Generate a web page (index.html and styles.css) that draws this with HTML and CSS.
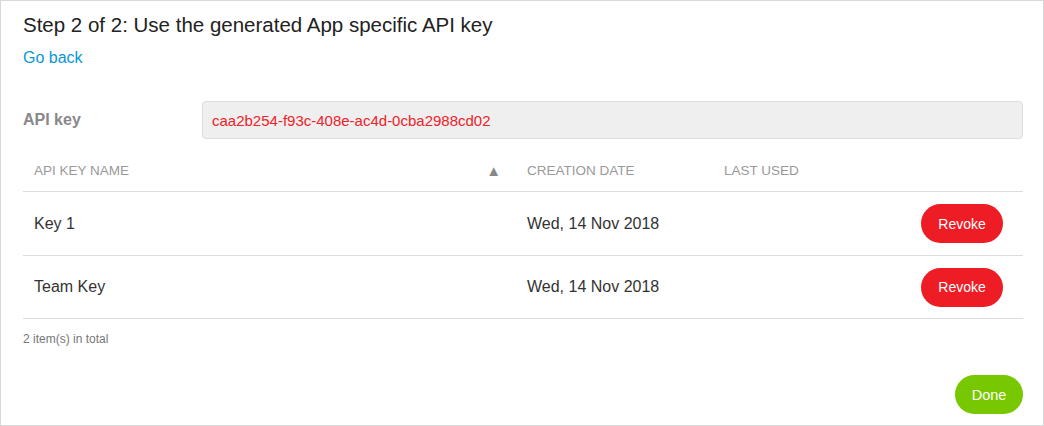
FILE: index.html
```html
<!DOCTYPE html>
<html lang="en">
<head>
<meta charset="utf-8">
<title>API key</title>
<link rel="stylesheet" href="styles.css">
</head>
<body>
<div class="panel">
  <h1 class="title">Step 2 of 2: Use the generated App specific API key</h1>
  <a class="back" href="#">Go back</a>
  <div class="key-row">
    <div class="key-label">API key</div>
    <div class="key-box">caa2b254-f93c-408e-ac4d-0cba2988cd02</div>
  </div>
  <div class="table">
    <div class="row head">
      <div class="cell name">API KEY NAME <span class="sort">&#9650;</span></div>
      <div class="cell date">CREATION DATE</div>
      <div class="cell used">LAST USED</div>
      <div class="cell act"></div>
    </div>
    <div class="row">
      <div class="cell name">Key 1</div>
      <div class="cell date">Wed, 14 Nov 2018</div>
      <div class="cell used"></div>
      <div class="cell act"><button class="btn revoke">Revoke</button></div>
    </div>
    <div class="row">
      <div class="cell name">Team Key</div>
      <div class="cell date">Wed, 14 Nov 2018</div>
      <div class="cell used"></div>
      <div class="cell act"><button class="btn revoke">Revoke</button></div>
    </div>
  </div>
  <div class="total">2 item(s) in total</div>
  <div class="footer"><button class="btn done">Done</button></div>
</div>
</body>
</html>
```
FILE: styles.css
```css
* { box-sizing: border-box; }
html, body { margin: 0; padding: 0; }
body {
  font-family: Arial, "Liberation Sans", Helvetica, sans-serif;
  background: #fff;
  color: #333;
}
.panel {
  width: 1044px;
  height: 426px;
  border: 1px solid #d9d9d9;
  padding: 0 20px 11px 22px;
  display: flex;
  flex-direction: column;
}
.title {
  margin: 12px 0 0;
  font-size: 20.5px;
  line-height: 24px;
  font-weight: normal;
  color: #222;
}
.back {
  margin-top: 11px;
  font-size: 16px;
  line-height: 20px;
  color: #0a96d8;
  text-decoration: none;
  align-self: flex-start;
}
.key-row {
  margin-top: 33px;
  display: flex;
  align-items: center;
}
.key-label {
  width: 179px;
  font-size: 16px;
  font-weight: bold;
  color: #888;
}
.key-box {
  flex: 1;
  height: 38px;
  background: #efefef;
  border: 1px solid #dcdcdc;
  border-radius: 4px;
  padding: 0 9px;
  display: flex;
  align-items: center;
  font-size: 15px;
  color: #ee2229;
}
.table { margin-top: 12px; }
.row {
  display: grid;
  grid-template-columns: 494px 197px 1fr 120px;
  height: 64px;
  border-bottom: 1px solid #dcdcdc;
  align-items: center;
  font-size: 16px;
  color: #333;
}
.row:last-child { height: 63px; }
.row.head {
  height: 41px;
  padding-bottom: 2px;
  font-size: 13.5px;
  color: #999;
}
.cell { padding-left: 10px; }
.cell.name {
  padding-left: 11px;
  padding-right: 16px;
  display: flex;
  justify-content: space-between;
  align-items: center;
}
.sort { color: #888; font-size: 15px; }
.cell.act {
  padding: 0 20px 0 0;
  display: flex;
  justify-content: flex-end;
}
.btn {
  border: none;
  height: 39px;
  border-radius: 20px;
  color: #fff;
  font-family: Arial, "Liberation Sans", sans-serif;
  font-size: 14px;
  padding: 0;
  cursor: pointer;
}
.revoke { width: 82px; background: #ee1c25; }
.done { width: 68px; background: #77c800; font-size: 14.5px; }
.total {
  margin-top: 13px;
  font-size: 12px;
  color: #777;
}
.footer {
  margin-top: auto;
  display: flex;
  justify-content: flex-end;
}
```
